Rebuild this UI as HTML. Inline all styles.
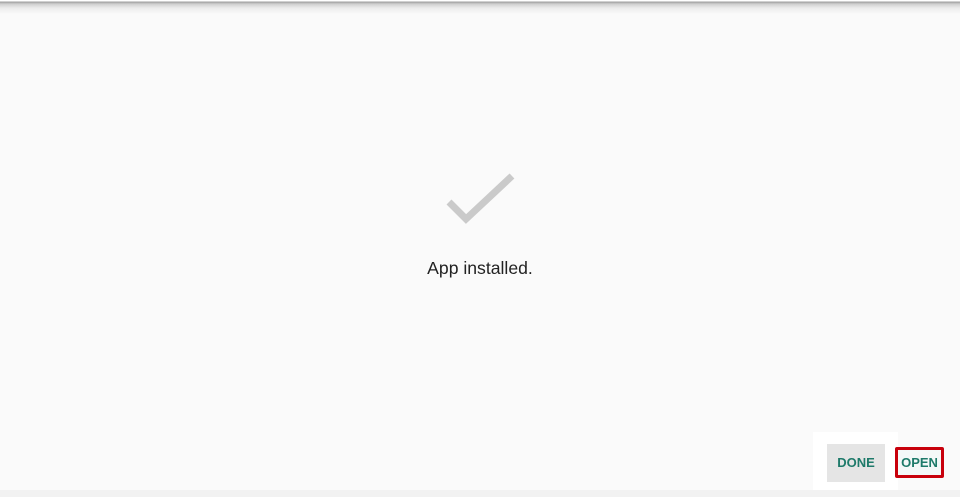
<!DOCTYPE html>
<html><head><style>
body{margin:0;width:960px;height:497px;background:#fafafa;position:relative;overflow:hidden;font-family:"Liberation Sans",sans-serif}
.top{position:absolute;left:0;top:0;width:960px;height:14px;background:linear-gradient(#fff 0,#fff 1px,#a0a0a0 2px,#cfcfcf 4px,#ececec 8px,#fafafa 14px)}
.txt{position:absolute;left:0;width:960px;top:258px;text-align:center;font-size:17.6px;color:#222}
.btn{position:absolute;font-size:13px;font-weight:bold;color:#1e7a6a;text-align:center}
</style></head><body>
<div class="top"></div>
<svg style="position:absolute;left:440px;top:170px" width="80" height="60"><path d="M9 32 L26 49 L72 6" stroke="#cacaca" stroke-width="7" fill="none"/></svg>
<div class="txt">App installed.</div>
<div style="position:absolute;left:813px;top:432px;width:85px;height:60px;background:#fff"></div>
<div class="btn" style="left:827px;top:444px;width:58px;height:38px;background:#e5e5e5;line-height:38px">DONE</div>
<div class="btn" style="left:895px;top:447px;width:43px;height:25px;border:3px solid #c8000c;border-radius:2px;line-height:26px;background:#f4f8f8">OPEN</div>
<div style="position:absolute;left:0;top:490px;width:960px;height:7px;background:#f2f2f2"></div>
</body></html>
